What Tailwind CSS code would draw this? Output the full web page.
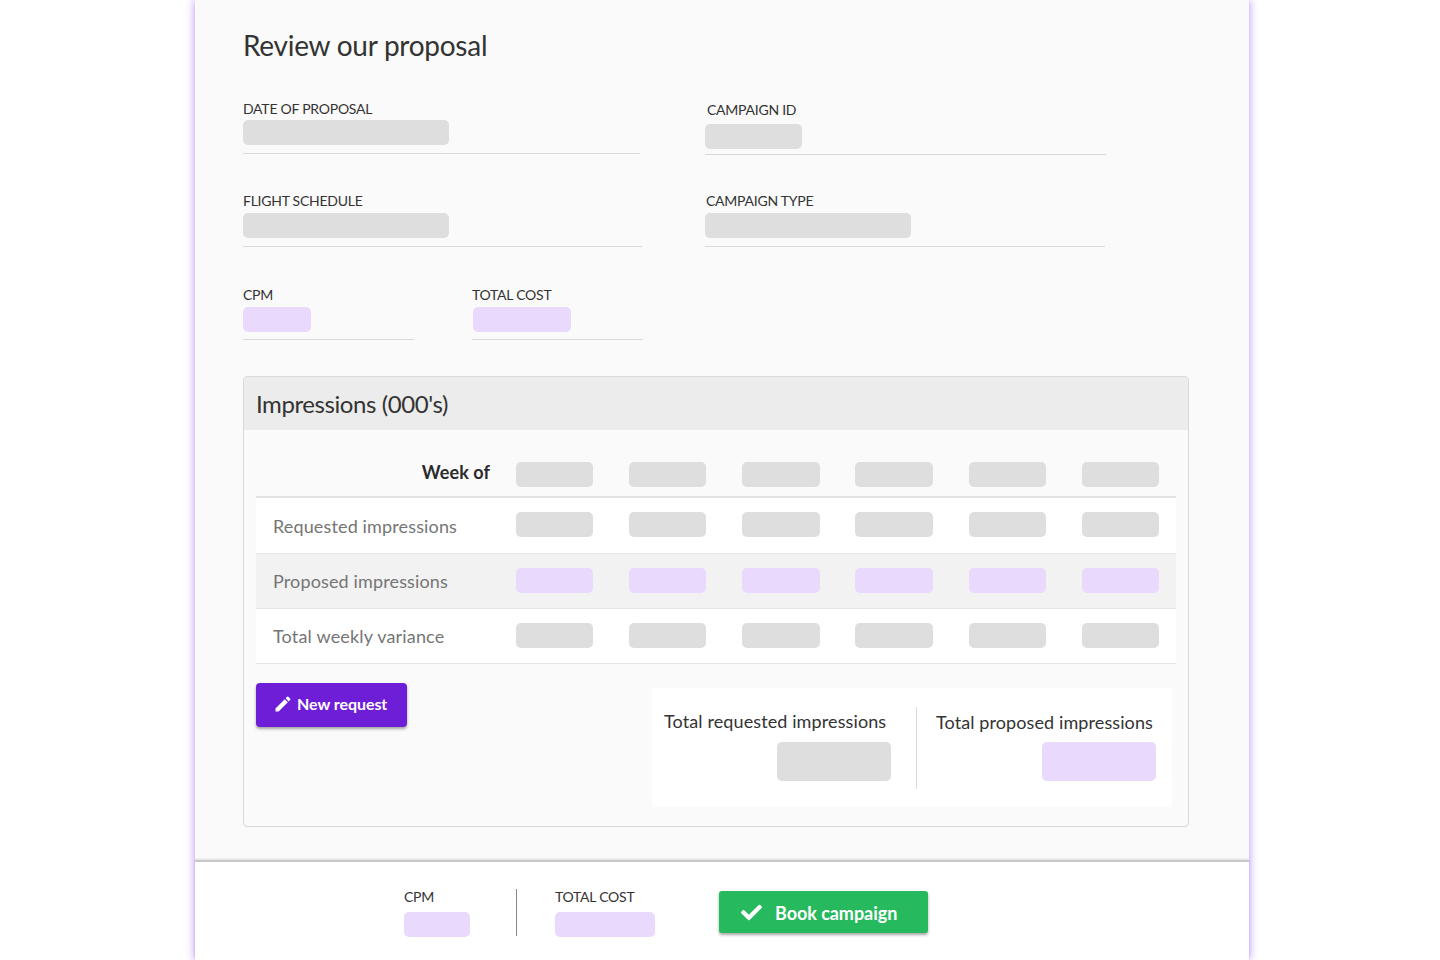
<!DOCTYPE html>
<html lang="en">
  <head>
    <meta charset="UTF-8" />
    <meta name="viewport" content="width=device-width, initial-scale=1.0" />
    <script src="https://cdn.jsdelivr.net/npm/@tailwindcss/browser@4"></script>
    <title>Review our proposal</title>
  </head>
  <body class="bg-white h-[960px] overflow-hidden font-['Lato',sans-serif] text-[#333]">
    <div class="ml-[195px] w-[1054px] h-[960px] flex flex-col shadow-[0_0_9px_#b98cff]">
      <!-- Proposal -->
      <main class="h-[860px] bg-[#fafafa] pl-[48px] pt-[27px]">
        <h1 class="text-[28px] leading-[36px] tracking-[-0.26px]">Review our proposal</h1>

        <!-- Date / campaign id -->
        <div class="flex mt-[36px] h-[71px]">
          <div class="w-[397px] h-[55px] border-b border-[#d9d9d9]">
            <div class="text-[14px] leading-[20px] tracking-[-0.25px] uppercase">Date of proposal</div>
            <div class="w-[206px] h-[25px] rounded-[5px] bg-[#dedede] mt-[1px]"></div>
          </div>
          <div class="ml-[65px] w-[401px] h-[56px] border-b border-[#d9d9d9]">
            <div class="pl-[2px] pt-[1px] text-[14px] leading-[20px] tracking-[-0.25px] uppercase">Campaign ID</div>
            <div class="w-[97px] h-[25px] rounded-[5px] bg-[#dedede] mt-[4px]"></div>
          </div>
        </div>

        <!-- Flight schedule / campaign type -->
        <div class="flex mt-[21px] h-[72px]">
          <div class="w-[399px] h-[56px] border-b border-[#d9d9d9]">
            <div class="text-[14px] leading-[20px] tracking-[-0.25px] uppercase">Flight schedule</div>
            <div class="w-[206px] h-[25px] rounded-[5px] bg-[#dedede] mt-[2px]"></div>
          </div>
          <div class="ml-[63px] w-[400px] h-[56px] border-b border-[#d9d9d9]">
            <div class="pl-[1px] text-[14px] leading-[20px] tracking-[-0.25px] uppercase">Campaign type</div>
            <div class="w-[206px] h-[25px] rounded-[5px] bg-[#dedede] mt-[2px]"></div>
          </div>
        </div>

        <!-- CPM / total cost -->
        <div class="flex mt-[22px] h-[55px]">
          <div class="w-[171px] h-[55px] border-b border-[#d9d9d9]">
            <div class="text-[14px] leading-[20px] tracking-[-0.25px] uppercase">CPM</div>
            <div class="w-[68px] h-[25px] rounded-[5px] bg-[#e9d9fd] mt-[2px]"></div>
          </div>
          <div class="ml-[58px] w-[171px] h-[55px] border-b border-[#d9d9d9]">
            <div class="text-[14px] leading-[20px] tracking-[-0.25px] uppercase">Total cost</div>
            <div class="ml-[1px] w-[98px] h-[25px] rounded-[5px] bg-[#e9d9fd] mt-[2px]"></div>
          </div>
        </div>

        <!-- Impressions card -->
        <section class="mt-[36px] w-[946px] h-[451px] border border-[#d9d9d9] rounded-[4px] overflow-hidden">
          <h2 class="h-[53px] bg-[#ececec] pl-[12px] text-[24px] leading-[54px] tracking-[-0.42px]">Impressions (000's)</h2>

          <div class="mx-[12px] w-[920px]">
            <div class="grid grid-cols-[224.1px_repeat(6,77.5px)] gap-x-[35.7px] items-start h-[68px] pt-[32px] border-b-2 border-[#e2e2e2]">
              <div class="-mr-[10px] -mt-[2px] text-right text-[18px] leading-[24px] font-bold text-[#2b2b2b] tracking-[0.1px]">Week of</div>
              <div class="h-[25px] rounded-[5px] bg-[#dedede]"></div>
              <div class="h-[25px] rounded-[5px] bg-[#dedede]"></div>
              <div class="h-[25px] rounded-[5px] bg-[#dedede]"></div>
              <div class="h-[25px] rounded-[5px] bg-[#dedede]"></div>
              <div class="h-[25px] rounded-[5px] bg-[#dedede]"></div>
              <div class="h-[25px] rounded-[5px] bg-[#dedede]"></div>
            </div>

            <div class="grid grid-cols-[224.1px_repeat(6,77.5px)] gap-x-[35.7px] items-start h-[56px] pt-[14px] bg-white border-b border-[#e6e6e6]">
              <div class="pl-[17px] pt-[2px] text-[18px] leading-[24px] tracking-[0.14px] text-[#757575] whitespace-nowrap">Requested impressions</div>
              <div class="h-[25px] rounded-[5px] bg-[#dedede]"></div>
              <div class="h-[25px] rounded-[5px] bg-[#dedede]"></div>
              <div class="h-[25px] rounded-[5px] bg-[#dedede]"></div>
              <div class="h-[25px] rounded-[5px] bg-[#dedede]"></div>
              <div class="h-[25px] rounded-[5px] bg-[#dedede]"></div>
              <div class="h-[25px] rounded-[5px] bg-[#dedede]"></div>
            </div>

            <div class="grid grid-cols-[224.1px_repeat(6,77.5px)] gap-x-[35.7px] items-start h-[55px] pt-[14px] bg-[#f2f2f2] border-b border-[#e6e6e6]">
              <div class="pl-[17px] pt-[1px] text-[18px] leading-[24px] tracking-[0.14px] text-[#757575] whitespace-nowrap">Proposed impressions</div>
              <div class="h-[25px] rounded-[5px] bg-[#e9d9fd]"></div>
              <div class="h-[25px] rounded-[5px] bg-[#e9d9fd]"></div>
              <div class="h-[25px] rounded-[5px] bg-[#e9d9fd]"></div>
              <div class="h-[25px] rounded-[5px] bg-[#e9d9fd]"></div>
              <div class="h-[25px] rounded-[5px] bg-[#e9d9fd]"></div>
              <div class="h-[25px] rounded-[5px] bg-[#e9d9fd]"></div>
            </div>

            <div class="grid grid-cols-[224.1px_repeat(6,77.5px)] gap-x-[35.7px] items-start h-[55px] pt-[14px] bg-white border-b border-[#e6e6e6]">
              <div class="pl-[17px] pt-[1px] text-[18px] leading-[24px] tracking-[0.18px] text-[#757575] whitespace-nowrap">Total weekly variance</div>
              <div class="h-[25px] rounded-[5px] bg-[#dedede]"></div>
              <div class="h-[25px] rounded-[5px] bg-[#dedede]"></div>
              <div class="h-[25px] rounded-[5px] bg-[#dedede]"></div>
              <div class="h-[25px] rounded-[5px] bg-[#dedede]"></div>
              <div class="h-[25px] rounded-[5px] bg-[#dedede]"></div>
              <div class="h-[25px] rounded-[5px] bg-[#dedede]"></div>
            </div>

            <div class="flex items-start">
              <button class="mt-[19px] w-[151px] h-[44px] flex items-center pl-[17px] pb-[3px] gap-[4px] rounded-[4px] bg-[#6f1ed8] text-white text-[16px] font-bold tracking-[-0.05px] shadow-[0_2px_3px_rgba(0,0,0,0.35)]">
                <svg class="w-[20px] h-[20px]" viewBox="0 0 24 24" fill="#fff"><path d="M3 17.25V21h3.75L17.81 9.94l-3.75-3.75L3 17.25zM20.71 7.04a1 1 0 0 0 0-1.41l-2.34-2.34a1 1 0 0 0-1.41 0l-1.83 1.83 3.75 3.75 1.83-1.83z"/></svg>
                New request
              </button>

              <div class="ml-[245px] mt-[24px] w-[520px] h-[119px] bg-white flex text-[18px] leading-[24px]">
                <div class="w-[264px] pt-[21px] pl-[12px] pr-[25px] flex flex-col">
                  <div class="whitespace-nowrap tracking-[0.11px]">Total requested impressions</div>
                  <div class="self-end mt-[9px] w-[114px] h-[39px] rounded-[5px] bg-[#dedede]"></div>
                </div>
                <div class="w-px h-[82px] mt-[19px] bg-[#d9d9d9]"></div>
                <div class="flex-1 pt-[22px] pl-[19px] pr-[16px] flex flex-col">
                  <div class="whitespace-nowrap tracking-[0.1px]">Total proposed impressions</div>
                  <div class="self-end mt-[8px] w-[114px] h-[39px] rounded-[5px] bg-[#e9d9fd]"></div>
                </div>
              </div>
            </div>
          </div>
        </section>
      </main>

      <!-- Footer bar -->
      <footer class="flex-1 bg-white border-t-2 border-[#c8c8c8] pl-[209px] flex items-start shadow-[0_-1px_2px_rgba(0,0,0,0.12)]">
        <div class="pt-[25px] w-[112px]">
          <div class="text-[14px] leading-[20px] tracking-[-0.25px] uppercase">CPM</div>
          <div class="w-[66px] h-[25px] rounded-[5px] bg-[#e9d9fd] mt-[5px]"></div>
        </div>
        <div class="w-px h-[47px] mt-[27px] bg-[#8a8a8a]"></div>
        <div class="pt-[25px] ml-[38px] w-[164px]">
          <div class="text-[14px] leading-[20px] tracking-[-0.25px] uppercase">Total cost</div>
          <div class="w-[100px] h-[25px] rounded-[5px] bg-[#e9d9fd] mt-[5px]"></div>
        </div>
        <button class="mt-[29px] w-[209px] h-[42px] flex items-center pl-[22px] pt-[3px] gap-[13px] rounded-[3px] bg-[#27b95e] text-white text-[18px] font-bold tracking-[-0.05px] shadow-[0_2px_3px_rgba(0,0,0,0.35)]">
          <svg class="w-[21px] h-[21px] -mt-[3px]" viewBox="0 0 512 512" fill="#fff"><path d="M173.898 439.404l-166.4-166.4c-9.997-9.997-9.997-26.206 0-36.204l36.203-36.204c9.997-9.998 26.207-9.998 36.204 0L192 312.69 432.095 72.596c9.997-9.997 26.207-9.997 36.204 0l36.203 36.204c9.997 9.997 9.997 26.206 0 36.204l-294.4 294.401c-9.998 9.997-26.207 9.997-36.204-.001z"/></svg>
          Book campaign
        </button>
      </footer>
    </div>
  </body>
</html>
